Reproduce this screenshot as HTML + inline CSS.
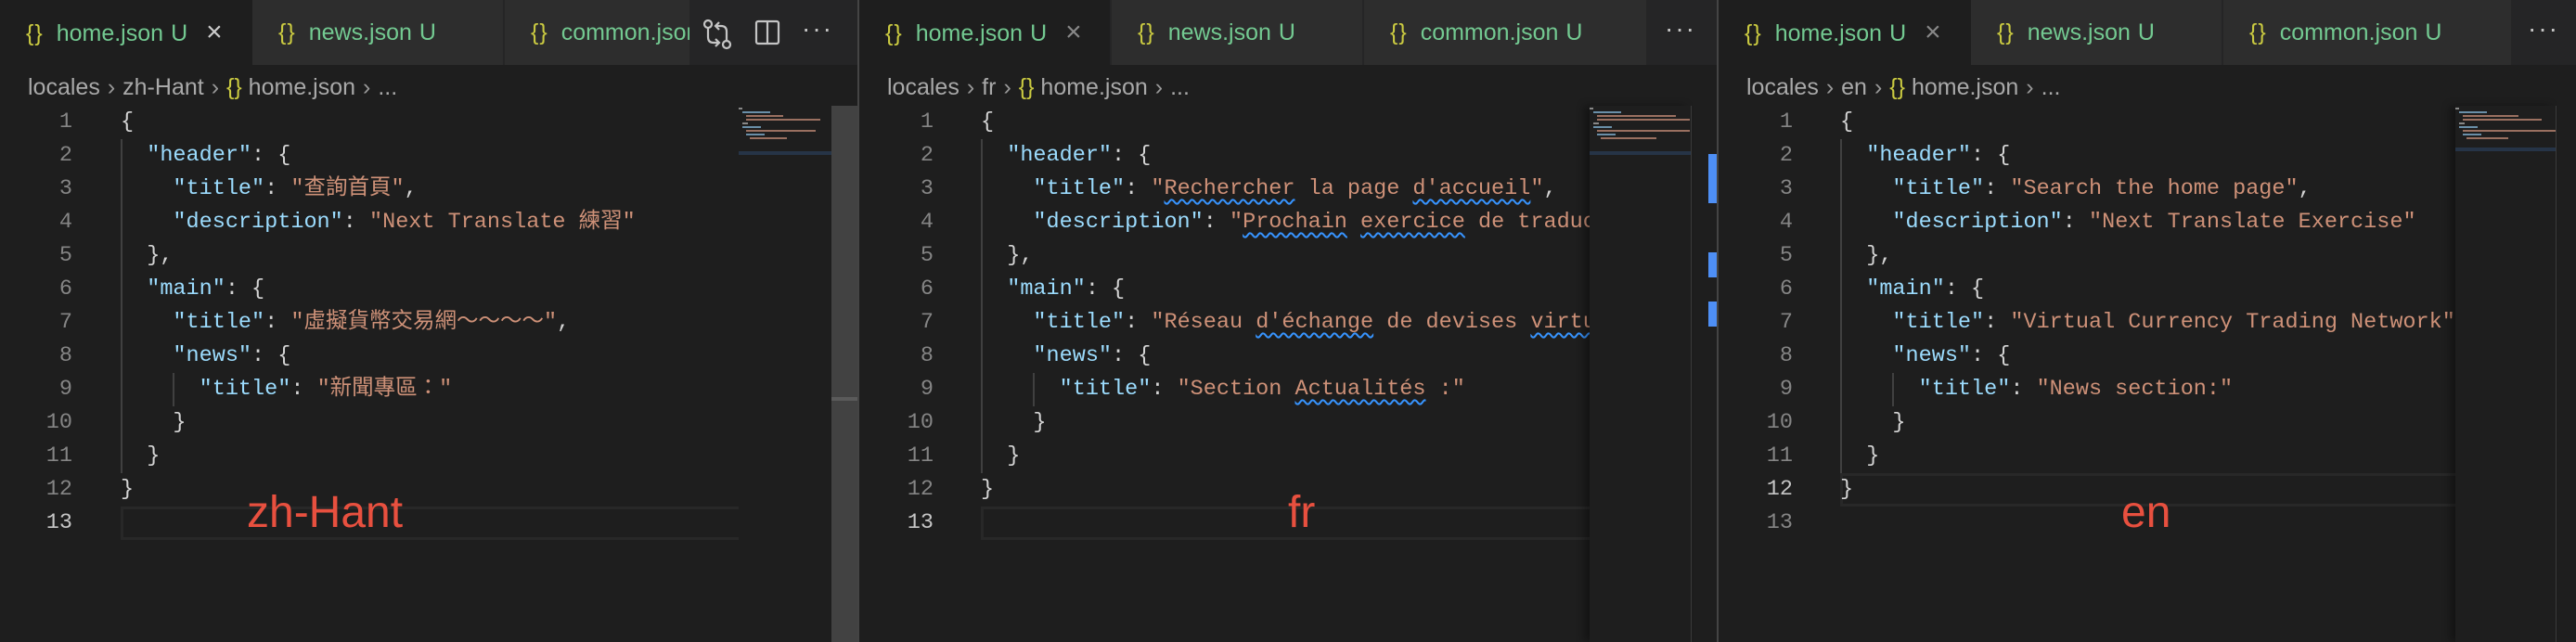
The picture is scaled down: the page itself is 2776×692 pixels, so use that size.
<!DOCTYPE html>
<html><head><meta charset="utf-8"><style>
*{margin:0;padding:0;box-sizing:border-box}
body{width:2776px;height:692px;background:#1e1e1e;overflow:hidden;position:relative;font-family:"Liberation Sans","Noto Sans CJK TC",sans-serif}
.pane{position:absolute;top:0;height:692px;width:924px;background:#1e1e1e;overflow:hidden}
.tabbar{position:absolute;left:0;top:0;height:70px;width:100%;background:#252526}
.tab{position:absolute;top:0;height:70px;background:#2d2d2d;color:#73c991;font-size:25px;line-height:70px;white-space:nowrap;overflow:hidden;padding-left:28px}
.tab.act{background:#1e1e1e}
.tab .br{color:#cbcb41;margin-right:14px;letter-spacing:1px}
.tab .u{margin-left:8px}
.tab .x{color:#cccccc;margin-left:20px;font-size:30px}
.dots{position:absolute;top:0;line-height:62px;color:#c5c5c5;font-size:28px;letter-spacing:2px}
.crumb{position:absolute;top:74px;left:30px;height:40px;line-height:40px;font-size:25px;color:#a9a9a9;white-space:nowrap}
.crumb .s{margin:0 8px;color:#999}
.crumb .br{color:#cbcb41}
.code{position:absolute;left:0;top:114px;height:578px;overflow:hidden}
.ln{position:absolute;left:0;width:78px;text-align:right;font-family:"Liberation Mono",monospace;font-size:23.5px;line-height:36px;color:#858585}
.ln.cur{color:#c6c6c6}
.l{position:absolute;white-space:pre;font-family:"Liberation Mono","Noto Sans CJK TC",monospace;font-size:23.5px;line-height:36px;color:#d4d4d4}
.k{color:#9cdcfe}.v{color:#ce9178}
.w{text-decoration:underline wavy #3794ff;text-decoration-thickness:2px;text-underline-offset:5px}
.g{position:absolute;width:2px;background:#404040}
.hl{position:absolute;height:36px;border:3px solid #282828}
.mm{position:absolute;top:114px;height:578px}
.mb{position:absolute;height:2px}
.lbl{position:absolute;top:525px;color:#e8503f;font-size:48px;font-family:"Liberation Sans",sans-serif}
</style></head><body>

<!-- PANE 1 -->
<div class="pane" style="left:0">
 <div class="tabbar"></div>
 <div class="tab act" style="left:0;width:272px"><span class="br">{}</span>home.json<span class="u">U</span><span class="x">×</span></div>
 <div class="tab" style="left:272px;width:270px"><span class="br">{}</span>news.json<span class="u">U</span></div>
 <div class="tab" style="left:544px;width:199px"><span class="br">{}</span>common.json</div>
 <svg style="position:absolute;left:756px;top:20px" width="36" height="34" viewBox="0 0 36 34" fill="none" stroke="#c5c5c5" stroke-width="2.2">
  <circle cx="7" cy="6" r="4"/><path d="M7 10v10q0 6 6 6h5M15 22l4 4-4 4"/>
  <circle cx="27" cy="28" r="4"/><path d="M27 24v-10q0-6-6-6h-5M19 4l-4 4 4 4"/></svg>
 <svg style="position:absolute;left:813px;top:21px" width="28" height="28" viewBox="0 0 28 28" fill="none" stroke="#c5c5c5" stroke-width="2.2"><rect x="2" y="2" width="24" height="24" rx="2"/><path d="M14 2v24"/></svg>
 <div class="dots" style="left:864px">···</div>
 <div class="crumb">locales<span class="s">›</span>zh-Hant<span class="s">›</span><span class="br">{}</span> home.json<span class="s">›</span>...</div>
 <div class="code" style="width:796px">
  <div class="g" style="left:130px;top:36px;height:360px"></div>
  <div class="g" style="left:186px;top:288px;height:36px"></div>
  <div class="hl" style="left:130px;top:432px;width:700px"></div>
  <div class="ln" style="top:0">1</div><div class="ln" style="top:36px">2</div><div class="ln" style="top:72px">3</div><div class="ln" style="top:108px">4</div><div class="ln" style="top:144px">5</div><div class="ln" style="top:180px">6</div><div class="ln" style="top:216px">7</div><div class="ln" style="top:252px">8</div><div class="ln" style="top:288px">9</div><div class="ln" style="top:324px">10</div><div class="ln" style="top:360px">11</div><div class="ln" style="top:396px">12</div><div class="ln cur" style="top:432px">13</div>
  <div class="l" style="left:130px;top:0">{</div>
  <div class="l" style="left:130px;top:36px">  <span class="k">"header"</span>: {</div>
  <div class="l" style="left:130px;top:72px">    <span class="k">"title"</span>: <span class="v">"查詢首頁"</span>,</div>
  <div class="l" style="left:130px;top:108px">    <span class="k">"description"</span>: <span class="v">"Next Translate 練習"</span></div>
  <div class="l" style="left:130px;top:144px">  },</div>
  <div class="l" style="left:130px;top:180px">  <span class="k">"main"</span>: {</div>
  <div class="l" style="left:130px;top:216px">    <span class="k">"title"</span>: <span class="v">"虛擬貨幣交易網～～～～"</span>,</div>
  <div class="l" style="left:130px;top:252px">    <span class="k">"news"</span>: {</div>
  <div class="l" style="left:130px;top:288px">      <span class="k">"title"</span>: <span class="v">"新聞專區："</span></div>
  <div class="l" style="left:130px;top:324px">    }</div>
  <div class="l" style="left:130px;top:360px">  }</div>
  <div class="l" style="left:130px;top:396px">}</div>
 </div>
 <div class="mm" style="left:796px;width:100px">
  <div class="mb" style="left:0;top:2px;width:4px;background:#888"></div>
  <div class="mb" style="left:4px;top:6px;width:30px;background:#6a8fa8"></div>
  <div class="mb" style="left:8px;top:10px;width:40px;background:#9a7060"></div>
  <div class="mb" style="left:8px;top:14px;width:80px;background:#9a7060"></div>
  <div class="mb" style="left:4px;top:18px;width:6px;background:#888"></div>
  <div class="mb" style="left:4px;top:22px;width:20px;background:#6a8fa8"></div>
  <div class="mb" style="left:8px;top:26px;width:75px;background:#9a7060"></div>
  <div class="mb" style="left:8px;top:30px;width:20px;background:#6a8fa8"></div>
  <div class="mb" style="left:12px;top:34px;width:40px;background:#9a7060"></div>
  <div class="mb" style="left:0;top:49px;width:100px;height:4px;background:#263447"></div>
 </div>
 <div style="position:absolute;left:896px;top:114px;width:28px;height:578px;background:#424242"></div>
 <div style="position:absolute;left:896px;top:428px;width:28px;height:4px;background:#5a5a5a"></div>
 <div class="lbl" style="left:266px">zh-Hant</div>
</div>
<div style="position:absolute;left:924px;top:0;width:2px;height:692px;background:#444"></div>

<!-- PANE 2 -->
<div class="pane" style="left:926px">
 <div class="tabbar"></div>
 <div class="tab act" style="left:0;width:270px"><span class="br">{}</span>home.json<span class="u">U</span><span class="x" style="color:#888">×</span></div>
 <div class="tab" style="left:272px;width:270px"><span class="br">{}</span>news.json<span class="u">U</span></div>
 <div class="tab" style="left:544px;width:304px"><span class="br">{}</span>common.json<span class="u">U</span></div>
 <div class="dots" style="left:868px">···</div>
 <div class="crumb">locales<span class="s">›</span>fr<span class="s">›</span><span class="br">{}</span> home.json<span class="s">›</span>...</div>
 <div class="code" style="width:787px">
  <div class="g" style="left:131px;top:36px;height:360px"></div>
  <div class="g" style="left:187px;top:288px;height:36px"></div>
  <div class="hl" style="left:131px;top:432px;width:700px"></div>
  <div class="ln" style="top:0;width:80px">1</div><div class="ln" style="top:36px;width:80px">2</div><div class="ln" style="top:72px;width:80px">3</div><div class="ln" style="top:108px;width:80px">4</div><div class="ln" style="top:144px;width:80px">5</div><div class="ln" style="top:180px;width:80px">6</div><div class="ln" style="top:216px;width:80px">7</div><div class="ln" style="top:252px;width:80px">8</div><div class="ln" style="top:288px;width:80px">9</div><div class="ln" style="top:324px;width:80px">10</div><div class="ln" style="top:360px;width:80px">11</div><div class="ln" style="top:396px;width:80px">12</div><div class="ln cur" style="top:432px;width:80px">13</div>
  <div class="l" style="left:131px;top:0">{</div>
  <div class="l" style="left:131px;top:36px">  <span class="k">"header"</span>: {</div>
  <div class="l" style="left:131px;top:72px">    <span class="k">"title"</span>: <span class="v">"<span class="w">Rechercher</span> la page <span class="w">d'accueil</span>"</span>,</div>
  <div class="l" style="left:131px;top:108px">    <span class="k">"description"</span>: <span class="v">"<span class="w">Prochain</span> <span class="w">exercice</span> de traduction"</span></div>
  <div class="l" style="left:131px;top:144px">  },</div>
  <div class="l" style="left:131px;top:180px">  <span class="k">"main"</span>: {</div>
  <div class="l" style="left:131px;top:216px">    <span class="k">"title"</span>: <span class="v">"Réseau <span class="w">d'échange</span> de devises <span class="w">virtuelles</span>"</span>,</div>
  <div class="l" style="left:131px;top:252px">    <span class="k">"news"</span>: {</div>
  <div class="l" style="left:131px;top:288px">      <span class="k">"title"</span>: <span class="v">"Section <span class="w">Actualités</span> :"</span></div>
  <div class="l" style="left:131px;top:324px">    }</div>
  <div class="l" style="left:131px;top:360px">  }</div>
  <div class="l" style="left:131px;top:396px">}</div>
 </div>
 <div class="mm" style="left:787px;width:109px;box-shadow:-6px 0 8px rgba(0,0,0,.35)">
  <div class="mb" style="left:0;top:2px;width:4px;background:#888"></div>
  <div class="mb" style="left:4px;top:6px;width:30px;background:#6a8fa8"></div>
  <div class="mb" style="left:8px;top:10px;width:85px;background:#9a7060"></div>
  <div class="mb" style="left:8px;top:14px;width:100px;background:#9a7060"></div>
  <div class="mb" style="left:4px;top:18px;width:6px;background:#888"></div>
  <div class="mb" style="left:4px;top:22px;width:20px;background:#6a8fa8"></div>
  <div class="mb" style="left:8px;top:26px;width:100px;background:#9a7060"></div>
  <div class="mb" style="left:8px;top:30px;width:20px;background:#6a8fa8"></div>
  <div class="mb" style="left:12px;top:34px;width:60px;background:#9a7060"></div>
  <div class="mb" style="left:0;top:49px;width:109px;height:4px;background:#263447"></div>
 </div>
 <div style="position:absolute;left:896px;top:114px;width:1px;height:578px;background:#3a3a3a"></div>
 <div style="position:absolute;left:915px;top:166px;width:9px;height:53px;background:#4e8ff5"></div>
 <div style="position:absolute;left:915px;top:272px;width:9px;height:27px;background:#4e8ff5"></div>
 <div style="position:absolute;left:915px;top:325px;width:9px;height:27px;background:#4e8ff5"></div>
 <div class="lbl" style="left:462px">fr</div>
</div>
<div style="position:absolute;left:1850px;top:0;width:2px;height:692px;background:#444"></div>

<!-- PANE 3 -->
<div class="pane" style="left:1852px">
 <div class="tabbar"></div>
 <div class="tab act" style="left:0;width:272px"><span class="br">{}</span>home.json<span class="u">U</span><span class="x" style="color:#888">×</span></div>
 <div class="tab" style="left:272px;width:270px"><span class="br">{}</span>news.json<span class="u">U</span></div>
 <div class="tab" style="left:544px;width:310px"><span class="br">{}</span>common.json<span class="u">U</span></div>
 <div class="dots" style="left:872px">···</div>
 <div class="crumb">locales<span class="s">›</span>en<span class="s">›</span><span class="br">{}</span> home.json<span class="s">›</span>...</div>
 <div class="code" style="width:794px">
  <div class="g" style="left:131px;top:36px;height:360px"></div>
  <div class="g" style="left:187px;top:288px;height:36px"></div>
  <div class="hl" style="left:131px;top:396px;width:700px"></div>
  <div class="ln" style="top:0;width:80px">1</div><div class="ln" style="top:36px;width:80px">2</div><div class="ln" style="top:72px;width:80px">3</div><div class="ln" style="top:108px;width:80px">4</div><div class="ln" style="top:144px;width:80px">5</div><div class="ln" style="top:180px;width:80px">6</div><div class="ln" style="top:216px;width:80px">7</div><div class="ln" style="top:252px;width:80px">8</div><div class="ln" style="top:288px;width:80px">9</div><div class="ln" style="top:324px;width:80px">10</div><div class="ln" style="top:360px;width:80px">11</div><div class="ln cur" style="top:396px;width:80px">12</div><div class="ln" style="top:432px;width:80px">13</div>
  <div class="l" style="left:131px;top:0">{</div>
  <div class="l" style="left:131px;top:36px">  <span class="k">"header"</span>: {</div>
  <div class="l" style="left:131px;top:72px">    <span class="k">"title"</span>: <span class="v">"Search the home page"</span>,</div>
  <div class="l" style="left:131px;top:108px">    <span class="k">"description"</span>: <span class="v">"Next Translate Exercise"</span></div>
  <div class="l" style="left:131px;top:144px">  },</div>
  <div class="l" style="left:131px;top:180px">  <span class="k">"main"</span>: {</div>
  <div class="l" style="left:131px;top:216px">    <span class="k">"title"</span>: <span class="v">"Virtual Currency Trading Network"</span>,</div>
  <div class="l" style="left:131px;top:252px">    <span class="k">"news"</span>: {</div>
  <div class="l" style="left:131px;top:288px">      <span class="k">"title"</span>: <span class="v">"News section:"</span></div>
  <div class="l" style="left:131px;top:324px">    }</div>
  <div class="l" style="left:131px;top:360px">  }</div>
  <div class="l" style="left:131px;top:396px">}</div>
 </div>
 <div class="mm" style="left:794px;width:108px;box-shadow:-6px 0 8px rgba(0,0,0,.35)">
  <div class="mb" style="left:0;top:2px;width:4px;background:#888"></div>
  <div class="mb" style="left:4px;top:6px;width:30px;background:#6a8fa8"></div>
  <div class="mb" style="left:8px;top:10px;width:60px;background:#9a7060"></div>
  <div class="mb" style="left:8px;top:14px;width:85px;background:#9a7060"></div>
  <div class="mb" style="left:4px;top:18px;width:6px;background:#888"></div>
  <div class="mb" style="left:4px;top:22px;width:20px;background:#6a8fa8"></div>
  <div class="mb" style="left:8px;top:26px;width:100px;background:#9a7060"></div>
  <div class="mb" style="left:8px;top:30px;width:20px;background:#6a8fa8"></div>
  <div class="mb" style="left:12px;top:34px;width:45px;background:#9a7060"></div>
  <div class="mb" style="left:0;top:45px;width:108px;height:4px;background:#263447"></div>
 </div>
 <div style="position:absolute;left:902px;top:114px;width:1px;height:578px;background:#3a3a3a"></div>
 <div class="lbl" style="left:434px">en</div>
</div>
</body></html>
